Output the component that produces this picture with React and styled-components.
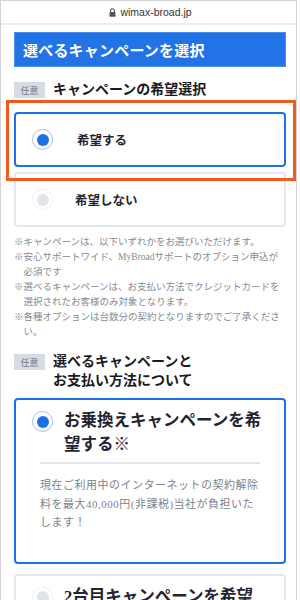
import React from "react";
import styled, { createGlobalStyle } from "styled-components";

const Global = createGlobalStyle`
  html, body { margin: 0; padding: 0; background: #fff; }
  body { font-family: "Liberation Serif", "Noto Sans CJK JP", serif; }
  * { box-sizing: border-box; }
`;

const Frame = styled.div`
  position: relative;
  width: 297px;
  height: 600px;
  overflow: hidden;
  border-left: 1px solid #d4d4d4;
  border-right: 1px solid #d4d4d4;
  border-top: 1px solid #d4d4d4;
  background: #fff;
`;

const UrlBar = styled.div`
  height: 24px;
  border-bottom: 2px solid #ececec;
  display: flex;
  align-items: center;
  justify-content: center;
  gap: 4px;
  padding-left: 4px;
  font-family: "Liberation Sans", "Noto Sans", sans-serif;
  font-size: 10.5px;
  color: #333;
`;

const Content = styled.div`
  padding: 7px 10px 0 13px;
  display: flex;
  flex-direction: column;
`;

const Banner = styled.div`
  height: 35px;
  background: #2173e6;
  border: 1px solid #4d8fee;
  color: #fff;
  font-size: 15px;
  font-weight: 700;
  display: flex;
  align-items: center;
  padding-left: 8px;
  letter-spacing: 0.2px;
`;

const SectionHead = styled.div`
  display: flex;
  align-items: flex-start;
  gap: 8px;
  margin-top: ${(p) => p.$mt}px;
`;

const Tag = styled.span`
  flex: none;
  width: 31px;
  height: 16px;
  background: #d6dce4;
  color: #737b86;
  font-size: 9px;
  display: flex;
  align-items: center;
  justify-content: center;
`;

const HeadTitle = styled.div`
  font-size: 14px;
  font-weight: 700;
  line-height: 19px;
  color: #1a1a1a;
  margin-top: -2px;
`;

const Card = styled.div`
  margin-top: ${(p) => p.$mt}px;
  border: ${(p) => (p.$on ? "2px solid #1d6fe8" : "2px solid #e3e8ee")};
  border-radius: 4px;
  background: #fff;
`;

const Row = styled.div`
  height: ${(p) => (p.$h ? `${p.$h}px` : "auto")};
  display: flex;
  align-items: ${(p) => (p.$top ? "flex-start" : "center")};
  padding-left: 16px;
  padding-top: ${(p) => p.$pt || 0}px;
  gap: ${(p) => p.$gap}px;
`;

const Radio = styled.span`
  flex: none;
  width: 21px;
  height: 21px;
  border-radius: 50%;
  border: 1.5px solid ${(p) => (p.$on ? "#9fc0f2" : "#eef1f4")};
  display: flex;
  align-items: center;
  justify-content: center;
  margin-top: ${(p) => p.$mt || 0}px;
  &::after {
    content: "";
    width: 12px;
    height: 12px;
    border-radius: 50%;
    background: ${(p) => (p.$on ? "#1f6fe6" : "#e1e5ea")};
  }
`;

const Label = styled.span`
  font-size: ${(p) => p.$size}px;
  font-weight: 700;
  color: #1f2430;
  line-height: ${(p) => p.$lh || "normal"};
`;

const Notes = styled.div`
  margin-top: 8px;
  font-size: 9.5px;
  line-height: 15px;
  color: #858b93;
`;

const Note = styled.div`
  padding-left: 1em;
  text-indent: -1em;
`;

const Divider = styled.div`
  height: 2px;
  background: #e1e6ec;
  margin: 5px 24px 0 24px;
`;

const Desc = styled.div`
  padding: 12px 0 30px 24px;
  font-size: 11px;
  letter-spacing: 0.5px;
  line-height: 18.5px;
  color: #7d838b;
  white-space: nowrap;
`;

const Highlight = styled.div`
  position: absolute;
  left: 5px;
  top: 99px;
  width: 290px;
  height: 81px;
  border: 3px solid #f15a1e;
  pointer-events: none;
`;

const Lock = () => (
  <svg width="7" height="9" viewBox="0 0 7 9">
    <path d="M1.6 4V2.6a1.9 1.9 0 0 1 3.8 0V4" fill="none" stroke="#555" strokeWidth="1.1" />
    <rect x="0.5" y="4" width="6" height="4.8" rx="0.8" fill="#555" />
  </svg>
);

export default function App() {
  return (
    <>
      <Global />
      <Frame>
        <UrlBar>
          <Lock />
          <span>wimax-broad.jp</span>
        </UrlBar>
        <Content>
          <Banner>選べるキャンペーンを選択</Banner>

          <SectionHead $mt={15}>
            <Tag>任意</Tag>
            <HeadTitle>キャンペーンの希望選択</HeadTitle>
          </SectionHead>

          <Card $on $mt={13}>
            <Row $h={51} $gap={24}>
              <Radio $on />
              <Label $size={12.5}>希望する</Label>
            </Row>
          </Card>

          <Card $mt={5}>
            <Row $h={51} $gap={22}>
              <Radio />
              <Label $size={12.5}>希望しない</Label>
            </Row>
          </Card>

          <Notes>
            <Note>※キャンペーンは、以下いずれかをお選びいただけます。</Note>
            <Note>※安心サポートワイド、MyBroadサポートのオプション申込が必須です</Note>
            <Note>※選べるキャンペーンは、お支払い方法でクレジットカードを選択されたお客様のみ対象となります。</Note>
            <Note>※各種オプションは台数分の契約となりますのでご了承ください。</Note>
          </Notes>

          <SectionHead $mt={14}>
            <Tag>任意</Tag>
            <HeadTitle>
              選べるキャンペーンと
              <br />
              お支払い方法について
            </HeadTitle>
          </SectionHead>

          <Card $on $mt={8}>
            <Row $top $pt={9} $gap={11}>
              <Radio $on $mt={2} />
              <Label $size={16.5} $lh="24px">
                お乗換えキャンペーンを希
                <br />
                望する※
              </Label>
            </Row>
            <Divider />
            <Desc>
              現在ご利用中のインターネットの契約解除
              <br />
              料を最大40,000円(非課税)当社が負担いた
              <br />
              します！
            </Desc>
          </Card>

          <Card $mt={10}>
            <Row $top $pt={9} $gap={11}>
              <Radio $mt={2} />
              <Label $size={16.5} $lh="24px">
                2台目キャンペーンを希望
              </Label>
            </Row>
          </Card>
        </Content>
        <Highlight />
      </Frame>
    </>
  );
}
